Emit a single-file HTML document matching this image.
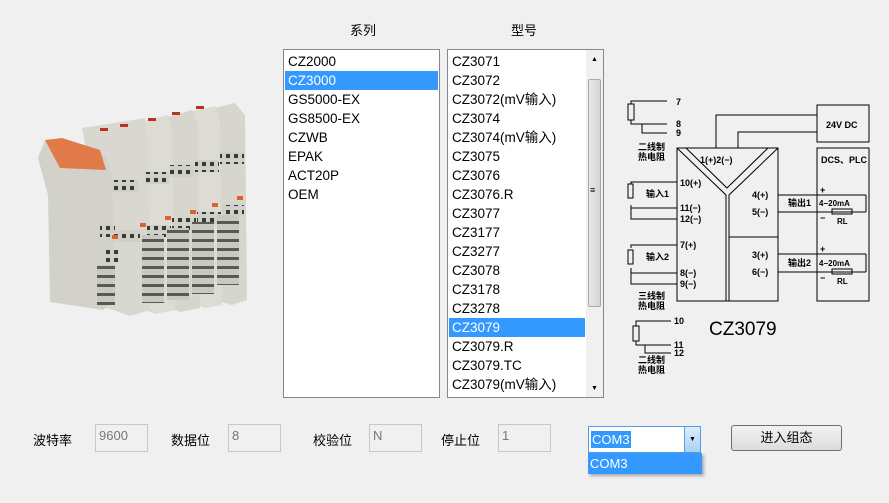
<!DOCTYPE html><html><head><meta charset="utf-8"><style>
body{margin:0;width:889px;height:503px;background:#f0f0f0;font-family:"Liberation Sans","Noto Sans CJK SC",sans-serif;position:relative;overflow:hidden;font-size:13px;color:#000}
.a{position:absolute}
.list{position:absolute;top:49px;height:349px;background:#fff;border:1px solid #828790;box-sizing:border-box}
.it{height:19px;line-height:19px;padding-left:3px;font-size:13.5px;margin:0 1px}
.sel{background:#3399ff;color:#fff}
.lb{position:absolute;top:430px;font-size:13px}
.in{position:absolute;top:424px;height:28px;width:53px;box-sizing:border-box;border:1px solid #c8c8c8;background:#f0f0f0;color:#777;padding:3px 0 0 3px;font-size:13px}
</style></head><body>
<div class="a" style="left:350px;top:20px">系列</div>
<div class="a" style="left:511px;top:20px">型号</div>
<div class="list" style="left:283px;width:157px">
<div class="it" style="margin-top:2px">CZ2000</div><div class="it sel">CZ3000</div><div class="it">GS5000-EX</div><div class="it">GS8500-EX</div><div class="it">CZWB</div><div class="it">EPAK</div><div class="it">ACT20P</div><div class="it">OEM</div></div>
<div class="list" style="left:447px;width:157px;overflow:hidden">
<div style="width:138px"><div class="it" style="margin-top:2px">CZ3071</div><div class="it">CZ3072</div><div class="it">CZ3072(mV输入)</div><div class="it">CZ3074</div><div class="it">CZ3074(mV输入)</div><div class="it">CZ3075</div><div class="it">CZ3076</div><div class="it">CZ3076.R</div><div class="it">CZ3077</div><div class="it">CZ3177</div><div class="it">CZ3277</div><div class="it">CZ3078</div><div class="it">CZ3178</div><div class="it">CZ3278</div><div class="it sel">CZ3079</div><div class="it">CZ3079.R</div><div class="it">CZ3079.TC</div><div class="it">CZ3079(mV输入)</div></div>
<div class="a" style="left:138px;top:0;width:17px;height:347px;background:#f0f0f0"></div>
<div class="a" style="left:140px;top:29px;width:13px;height:228px;background:linear-gradient(90deg,#e8e8e8,#d4d4d4);border:1px solid #a8a8a8;border-radius:2px;box-sizing:border-box"></div>
<div class="a" style="left:143px;top:6px;font-size:7px">▲</div>
<div class="a" style="left:143px;top:335px;font-size:7px">▼</div>
<div class="a" style="left:142px;top:135px;font-size:9px">≡</div>
</div>
<svg class="a" style="left:0;top:0" width="889" height="503">
<defs><pattern id="fin" width="8" height="9" patternUnits="userSpaceOnUse"><rect width="8" height="9" fill="#c9c9c1"/><rect y="5" width="8" height="3" fill="#5a5a55"/></pattern>
<pattern id="tb" width="8" height="8" patternUnits="userSpaceOnUse"><rect width="8" height="8" fill="#d0d0c8"/><rect x="2" y="2" width="4" height="4" fill="#3a3a36"/></pattern></defs>
<!-- right group modules (back to front) -->
<g>
<polygon points="215,108 235,103 245,115 247,300 232,305 215,300" fill="#d6d6ce"/>
<polygon points="190,112 215,106 220,120 222,305 205,308 190,303" fill="#dcdcd4"/>
<polygon points="165,118 192,110 198,125 200,308 180,312 165,306" fill="#d6d6ce"/>
<polygon points="140,122 168,115 172,130 175,310 155,314 140,308" fill="#dcdcd4"/>
<polygon points="82,128 145,118 148,140 150,310 130,316 90,302 88,160" fill="#d8d8d0"/>
</g>
<g fill="url(#tb)"><rect x="108" y="180" width="30" height="12"/><rect x="110" y="230" width="30" height="12"/><rect x="145" y="172" width="24" height="12"/><rect x="147" y="225" width="24" height="12"/><rect x="170" y="165" width="24" height="12"/><rect x="172" y="218" width="24" height="12"/><rect x="195" y="160" width="24" height="12"/><rect x="197" y="212" width="24" height="12"/><rect x="220" y="152" width="24" height="12"/><rect x="222" y="205" width="22" height="12"/></g>
<g fill="url(#fin)"><rect x="142" y="235" width="22" height="68"/><rect x="167" y="228" width="22" height="72"/><rect x="192" y="222" width="22" height="72"/><rect x="217" y="215" width="22" height="70"/></g>
<g fill="#e06030"><rect x="140" y="223" width="6" height="4"/><rect x="165" y="216" width="6" height="4"/><rect x="190" y="210" width="6" height="4"/><rect x="212" y="203" width="6" height="4"/><rect x="237" y="196" width="6" height="4"/></g>
<g fill="#c03020"><rect x="100" y="128" width="8" height="3"/><rect x="120" y="124" width="8" height="3"/><rect x="148" y="118" width="8" height="3"/><rect x="172" y="112" width="8" height="3"/><rect x="196" y="106" width="8" height="3"/></g>
<!-- front left module -->
<polygon points="38,158 45,140 105,155 112,175 115,300 103,310 50,302 48,195" fill="#d2d2ca"/>
<polygon points="45,140 62,138 100,150 106,170 60,168" fill="#e07a48"/>
<rect x="100" y="225" width="15" height="12" fill="url(#tb)"/><rect x="105" y="250" width="14" height="12" fill="url(#tb)"/>
<rect x="97" y="265" width="18" height="40" fill="url(#fin)"/>
<rect x="112" y="235" width="6" height="4" fill="#e06030"/>
<!-- diagram -->
<g stroke="#000" stroke-width="1" fill="none">
<rect x="677" y="148" width="101" height="153"/>
<rect x="817" y="105" width="52" height="37"/>
<rect x="817" y="148" width="52" height="153"/>
<polyline points="677,148 726,195 726,301"/><polyline points="778,148 729,195 729,301"/>
<polyline points="686,148 727,188 768,148"/>
<line x1="729" y1="237" x2="778" y2="237"/>
<polyline points="716,148 716,115 817,115"/><polyline points="738,148 738,132 817,132"/>
<polyline points="667,101 631,101 631,104"/><rect x="628" y="104" width="6" height="16"/><polyline points="631,120 631,124 667,124"/><polyline points="642,124 642,133 667,133"/>
<polyline points="677,182 631,182 631,184"/><rect x="628" y="184" width="5" height="14"/><polyline points="631,205 631,208 677,208"/><polyline points="631,208 631,219 677,219"/>
<polyline points="677,245 631,245 631,248"/><rect x="628" y="250" width="5" height="14"/><polyline points="631,268 631,273 677,273"/><polyline points="631,273 631,284 677,284"/>
<polyline points="671,321 636,321 636,326"/><rect x="633" y="326" width="6" height="15"/><polyline points="636,341 636,345 671,345"/><polyline points="645,345 645,353 671,353"/>
<line x1="778" y1="195" x2="866" y2="195"/><line x1="778" y1="212" x2="866" y2="212"/><line x1="866" y1="195" x2="866" y2="212"/>
<line x1="778" y1="254" x2="866" y2="254"/><line x1="778" y1="272" x2="866" y2="272"/><line x1="866" y1="254" x2="866" y2="272"/>
<rect x="832" y="209" width="20" height="5"/><rect x="832" y="269" width="20" height="5"/>
<line x1="778" y1="180" x2="778" y2="284"/>
</g>
<g font-family="Liberation Sans,Noto Sans CJK SC,sans-serif" font-size="9" font-weight="bold" fill="#000">
<text x="676" y="105">7</text><text x="676" y="127">8</text><text x="676" y="136">9</text>
<text x="638" y="150">二线制</text><text x="638" y="160">热电阻</text>
<text x="700" y="163">1(+)2(−)</text><text x="826" y="128">24V DC</text><text x="821" y="163">DCS、PLC</text>
<text x="680" y="186">10(+)</text><text x="680" y="211">11(−)</text><text x="680" y="222">12(−)</text><text x="680" y="248">7(+)</text><text x="680" y="276">8(−)</text><text x="680" y="287">9(−)</text>
<text x="646" y="197">输入1</text><text x="646" y="260">输入2</text>
<text x="752" y="198">4(+)</text><text x="752" y="215">5(−)</text><text x="752" y="258">3(+)</text><text x="752" y="275">6(−)</text>
<text x="788" y="206">输出1</text><text x="788" y="266">输出2</text>
<text x="819" y="206" font-size="8">4−20mA</text><text x="819" y="266" font-size="8">4−20mA</text>
<text x="820" y="193">+</text><text x="820" y="221">−</text><text x="820" y="252">+</text><text x="820" y="281">−</text>
<text x="837" y="224" font-size="8">RL</text><text x="837" y="284" font-size="8">RL</text>
<text x="638" y="299">三线制</text><text x="638" y="309">热电阻</text>
<text x="674" y="324">10</text><text x="674" y="348">11</text><text x="674" y="356">12</text>
<text x="638" y="363">二线制</text><text x="638" y="373">热电阻</text>
</g>
<text x="709" y="335" font-family="Liberation Sans,sans-serif" font-size="19" fill="#000">CZ3079</text>
</svg>
<div class="lb" style="left:33px">波特率</div><div class="in" style="left:95px">9600</div>
<div class="lb" style="left:171px">数据位</div><div class="in" style="left:228px">8</div>
<div class="lb" style="left:313px">校验位</div><div class="in" style="left:369px">N</div>
<div class="lb" style="left:441px">停止位</div><div class="in" style="left:498px">1</div>
<div class="a" style="left:588px;top:426px;width:113px;height:27px;border:1px solid #569de5;box-sizing:border-box;background:#fff"><span style="position:absolute;left:2px;top:4px;background:#3399ff;color:#fff;padding:1px 1px">COM3</span><div class="a" style="right:0;top:0;width:15px;height:25px;background:linear-gradient(#dcecfc,#a8d2f2);border-left:1px solid #569de5;font-size:7px;text-align:center;line-height:25px">▼</div></div>
<div class="a" style="left:588px;top:453px;width:114px;height:21px;background:#3399ff;color:#fff;line-height:21px;padding-left:2px;box-sizing:border-box;box-shadow:2px 2px 3px rgba(0,0,0,.3)">COM3</div>
<div class="a" style="left:731px;top:425px;width:111px;height:26px;border:1px solid #707070;border-radius:3px;box-sizing:border-box;background:linear-gradient(#f2f2f2,#dcdcdc);text-align:center;line-height:24px">进入组态</div>
</body></html>
